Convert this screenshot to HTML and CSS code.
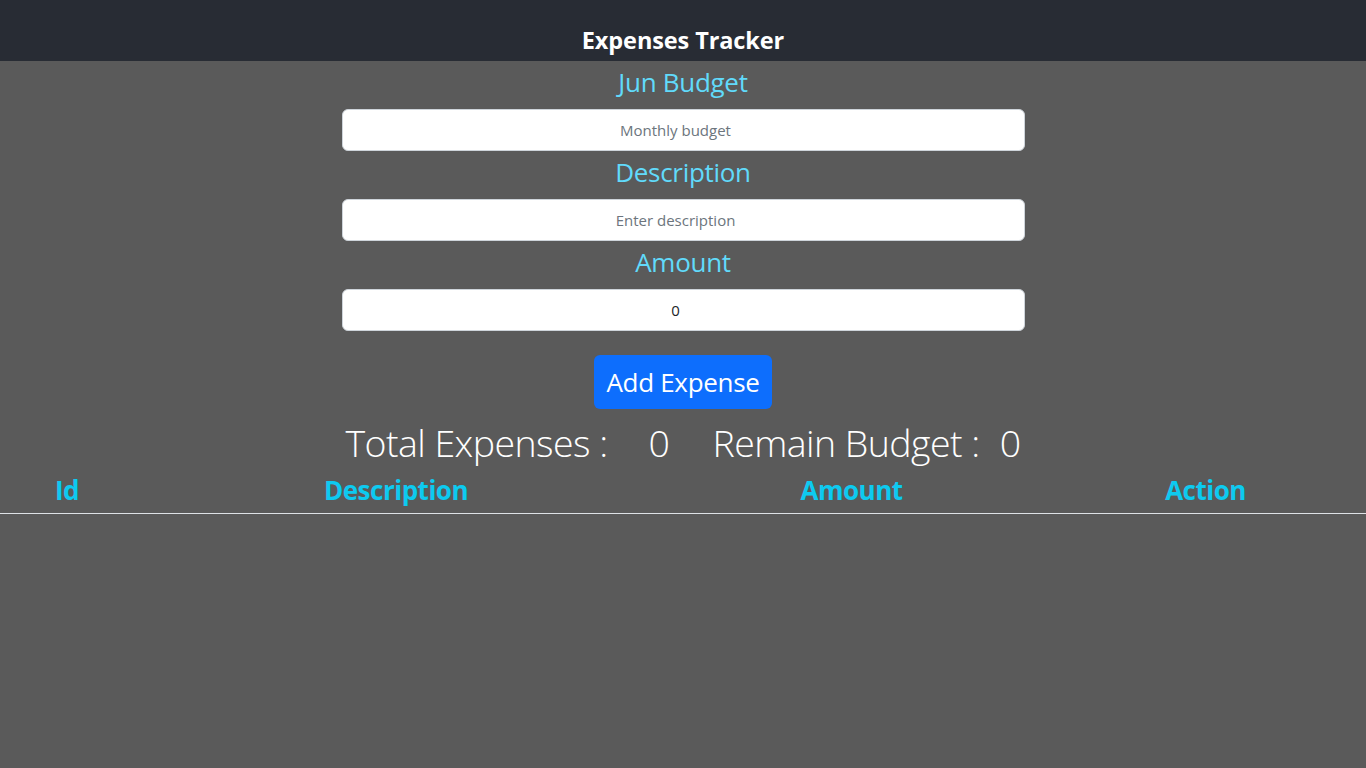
FILE: index.html
```html
<!DOCTYPE html>
<html lang="en">
<head>
<meta charset="utf-8">
<title>Expenses Tracker</title>
<link rel="stylesheet" href="styles.css">
</head>
<body>
<header class="app-header">
  <h1 class="app-title">Expenses Tracker</h1>
</header>
<main class="app-main">
  <form class="expense-form">
    <div class="field">
      <label class="field-label" for="budget">Jun Budget</label>
      <input class="field-input" id="budget" type="text" placeholder="Monthly budget">
    </div>
    <div class="field">
      <label class="field-label" for="desc">Description</label>
      <input class="field-input" id="desc" type="text" placeholder="Enter description">
    </div>
    <div class="field">
      <label class="field-label" for="amount">Amount</label>
      <input class="field-input" id="amount" type="text" value="0">
    </div>
    <button class="add-btn" type="button">Add Expense</button>
  </form>
  <div class="totals">
    <span class="total-label">Total Expenses :</span>
    <span class="total-value">0</span>
    <span class="total-label remain">Remain Budget :</span>
    <span class="total-value last">0</span>
  </div>
  <table class="expense-table">
    <colgroup>
      <col class="c-id"><col class="c-desc"><col class="c-amount"><col class="c-action">
    </colgroup>
    <thead>
      <tr><th>Id</th><th>Description</th><th>Amount</th><th>Action</th></tr>
    </thead>
    <tbody></tbody>
  </table>
</main>
</body>
</html>
```
FILE: styles.css
```css
* { box-sizing: border-box; }
html, body { margin: 0; padding: 0; }
body {
  background: #5a5a5a;
  font-family: "Open Sans", "Noto Sans", sans-serif;
  min-height: 768px;
}
.app-header {
  background: #282c34;
  height: 61px;
  display: flex;
  align-items: flex-end;
  justify-content: center;
  padding-bottom: 6px;
}
.app-title {
  margin: 0;
  color: #fff;
  font-size: 23.5px;
  font-weight: 700;
  line-height: 30px;
  letter-spacing: -0.1px;
}
.app-main { display: flex; flex-direction: column; align-items: center; }
.expense-form {
  width: 683px;
  display: flex;
  flex-direction: column;
  align-items: center;
}
.field { width: 100%; display: flex; flex-direction: column; align-items: center; }
.field-label {
  color: #61dafb;
  font-size: 26px;
  font-weight: 400;
  line-height: 42px;
  height: 48px;
  letter-spacing: -0.3px;
}
.field-input {
  width: 100%;
  height: 42px;
  border: 1px solid #ced4da;
  border-radius: 6px;
  background: #fff;
  text-align: center;
  font-family: inherit;
  font-size: 15px;
  color: #212529;
  padding: 6px 27px 6px 12px;
}
.field-input::placeholder { color: #6c757d; }
.add-btn {
  margin-top: 24px;
  width: 178px;
  height: 54px;
  background: #0d6efd;
  color: #fff;
  border: none;
  border-radius: 6px;
  font-family: inherit;
  font-size: 26px;
  letter-spacing: -0.3px;
}
.totals {
  margin-top: 10px;
  display: flex;
  align-items: center;
  color: #fff;
  font-size: 37.5px;
  font-weight: 300;
  line-height: 48px;
  letter-spacing: -0.55px;
}
.total-value { margin: 0 43px 0 41px; }
.total-value.last { margin: 0 0 0 20px; }
.expense-table {
  margin-top: 4px;
  width: 100%;
  border-collapse: collapse;
}
.c-id { width: 134px; }
.c-desc { width: 524px; }
.c-amount { width: 387px; }
.c-action { width: 321px; }
.expense-table th {
  color: #0dcaf0;
  font-size: 26px;
  font-weight: 700;
  text-align: center;
  line-height: 32px;
  padding: 3px 0 7px;
  border-bottom: 1px solid #dee2e6;
  letter-spacing: -0.5px;
}
```
